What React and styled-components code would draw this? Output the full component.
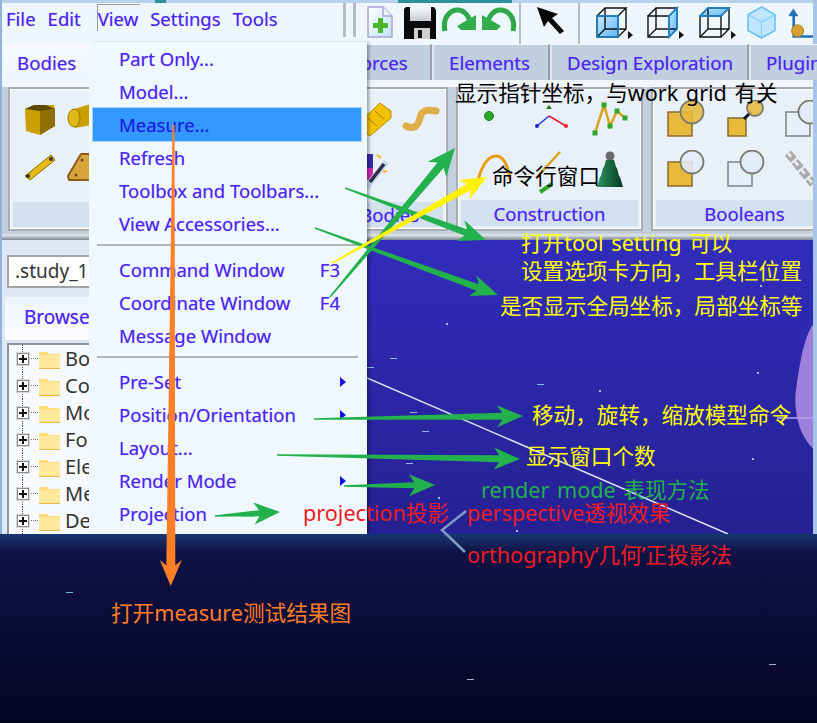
import React from "react";
import styled, { createGlobalStyle } from "styled-components";

const GlobalStyle = createGlobalStyle`
    html, body {
        margin: 0;
        padding: 0;
        background: #07072a;
    }
`;

const uiFont = `"Noto Sans", "Liberation Sans", sans-serif`;
const noteFont = `"Noto Sans", "Noto Sans CJK SC", sans-serif`;
const inkHalo = `0 0 1px rgba(74, 36, 245, 0.4)`;

const Stage = styled.div`
    position: relative;
    width: 817px;
    height: 723px;
    overflow: hidden;
    display: flex;
    flex-direction: column;
    font-family: ${uiFont};
`;

const Workspace = styled.div`
    position: relative;
    height: 534px;
    flex: none;
    display: flex;
    flex-direction: column;
    background: #eaf2fb;
    border-left: 2px solid #8fb3dc;
    border-right: 4px solid #a7c3e6;
    box-sizing: border-box;
`;

const TopStrip = styled.div`
    height: 3px;
    background: linear-gradient(90deg, #b9d2ec 0 153px, #2c8f9b 153px 164px, #b9d2ec 164px 396px, #2c8f9b 396px 510px, #b9d2ec 510px);
`;

const MenuBar = styled.div`
    height: 41px;
    display: flex;
    background: #eff7fe;
`;

const MenuList = styled.div`
    width: 341px;
    flex: none;
    display: flex;
    align-items: center;
    padding: 0 0 12px 3px;
    box-sizing: border-box;
    gap: 9px;
`;

const MenuLabel = styled.span`
    font-size: 18.5px;
    color: #4a24f5;
    text-shadow: ${inkHalo};
    padding: 1px 2px 0 0;
    margin-left: ${(p) => p.$shift || 0}px;
    border-top: ${(p) => (p.$open ? "1px solid #9a9a9a" : "1px solid transparent")};
    border-left: ${(p) => (p.$open ? "1px solid #9a9a9a" : "1px solid transparent")};
`;

const Grip = styled.div`
    width: 13px;
    height: 34px;
    flex: none;
    border-left: 3px solid #b5bcc4;
    border-right: 3px solid #b5bcc4;
    box-sizing: border-box;
    margin-right: 11px;
`;

const Toolbar = styled.div`
    display: flex;
    align-items: flex-start;
    padding-top: 3px;
`;

const ToolSlot = styled.div`
    width: ${(p) => p.$w}px;
    flex: none;
    display: flex;
`;

const ToolDivider = styled.div`
    width: 2px;
    height: 41px;
    margin-top: -3px;
    flex: none;
    background: #b4bcc4;
`;

const TabRow = styled.div`
    height: 36px;
    display: flex;
    background: #dfe9f5;
    gap: 2px;
`;

const Tab = styled.div`
    flex: none;
    box-sizing: border-box;
    width: ${(p) => (p.$w ? `${p.$w}px` : "auto")};
    padding: 0 0 0 15px;
    display: flex;
    align-items: center;
    white-space: nowrap;
    font-size: 18.7px;
    color: #4a24f5;
    text-shadow: ${inkHalo};
    background: ${(p) => (p.$active ? "linear-gradient(#f8fbff, #eef5fc)" : "#c1d0e0")};
    border-right: 2px solid #9aa0a8;
    border-top: 1px solid #f4f8fc;
`;

const Ribbon = styled.div`
    height: 152px;
    display: flex;
    gap: 8px;
    padding: 7px 0 1px 6px;
    box-sizing: border-box;
    overflow: hidden;
    background: linear-gradient(#f0f6fc 0 7px, #c2d0e0 7px);
`;

const RibbonGroup = styled.div`
    width: ${(p) => p.$w}px;
    flex: none;
    display: flex;
    flex-direction: column;
    box-sizing: border-box;
    border: 2px solid #a9adb2;
    box-shadow: inset 0 0 0 1px #fff;
    background: #e8f0f9;
    overflow: hidden;
`;

const IconGrid = styled.div`
    flex: 1;
    display: grid;
    grid-template-columns: ${(p) => p.$cols};
    grid-auto-rows: 50px;
    padding: ${(p) => p.$pad};
    align-items: start;
`;

const GroupLabel = styled.div`
    height: 31px;
    margin: 0 3px 3px;
    display: flex;
    align-items: center;
    justify-content: ${(p) => (p.$end ? "flex-end" : "center")};
    padding-right: ${(p) => (p.$end ? "24px" : "0")};
    font-size: 18.5px;
    color: #4a24f5;
    text-shadow: ${inkHalo};
    background: #d3e0ef;
`;

const Splitter = styled.div`
    height: 8px;
    flex: none;
    background: linear-gradient(#b6c4d4, #dfe5ec 40%, #a8b2be 70%, #80868e);
`;

const Lower = styled.div`
    flex: 1;
    min-height: 0;
    display: flex;
`;

const SidePanel = styled.div`
    width: 365px;
    flex: none;
    box-sizing: border-box;
    padding: 15px 0 0 5px;
    background: #dfe9f5;
    display: flex;
    flex-direction: column;
    overflow: hidden;
`;

const StudyField = styled.div`
    height: 33px;
    flex: none;
    box-sizing: border-box;
    border: 2px solid #a0a4a8;
    background: #fff;
    padding-left: 6px;
    font-size: 19px;
    line-height: 28px;
    color: #333;
`;

const BrowseTab = styled.div`
    height: 43px;
    flex: none;
    margin: 9px 0 3px -2px;
    padding-left: 19px;
    font-size: 19px;
    line-height: 41px;
    color: #4a24f5;
    text-shadow: ${inkHalo};
    background: linear-gradient(#eef5fc, #fafcff);
`;

const TreeBox = styled.div`
    flex: 1;
    border: 2px solid #8f9499;
    border-bottom: none;
    background: #f6fafe;
    padding: 0 0 0 8px;
    display: flex;
    flex-direction: column;
`;

const TreeRow = styled.div`
    height: 27px;
    flex: none;
    display: flex;
    align-items: center;
    gap: 5px;
    font-size: 20px;
    line-height: 24px;
    color: #333;
    background:
        repeating-linear-gradient(#555 0 1px, transparent 1px 2px) 5px 0 / 1px 100% no-repeat,
        repeating-linear-gradient(90deg, #777 0 1px, transparent 1px 2px) 12px 50% / 12px 1px no-repeat;
`;

const PlusBox = styled.span`
    width: 12px;
    height: 12px;
    flex: none;
    position: relative;
    box-sizing: border-box;
    border: 1px solid #8c8c8c;
    box-shadow: 0 0 0 1px #d8d8d8;
    background: #fff;
    margin-right: 5px;

    &::before {
        content: "";
        position: absolute;
        left: 1px;
        right: 1px;
        top: 4px;
        height: 2px;
        background: #111;
    }
    &::after {
        content: "";
        position: absolute;
        top: 1px;
        bottom: 1px;
        left: 4px;
        width: 2px;
        background: #111;
    }
`;

const Viewport = styled.div`
    flex: 1;
    position: relative;
    overflow: hidden;
    background: linear-gradient(#322cbc, #252192);
`;

const Scene = styled.svg`
    position: absolute;
    left: 0;
    top: 0;
`;

const DropMenu = styled.div`
    position: absolute;
    left: 87px;
    top: 42px;
    width: 278px;
    bottom: 0;
    background: #f0f8ff;
    box-shadow: 3px 0 3px -1px rgba(0, 0, 0, 0.35);
    display: flex;
    flex-direction: column;
`;

const DropRow = styled.div`
    height: 33px;
    flex: none;
    display: flex;
    align-items: center;
    justify-content: space-between;
    box-sizing: border-box;
    margin: 0 6px 0 4px;
    padding: 0 15px 0 26px;
    font-size: 18.5px;
    color: ${(p) => (p.$active ? "#1a1ae0" : "#4a24f5")};
    text-shadow: ${inkHalo};
    background: ${(p) => (p.$active ? "#3399ff" : "transparent")};
    outline: ${(p) => (p.$active ? "1px solid #a8d2ff" : "none")};
`;

const Key = styled.span`
    margin-right: 6px;
`;

const SubArrow = styled.span`
    width: 0;
    height: 0;
    border-left: 6px solid #1414e6;
    border-top: 5.5px solid transparent;
    border-bottom: 5.5px solid transparent;
`;

const Divider = styled.div`
    height: 2px;
    flex: none;
    margin: 4px 9px 7px 8px;
    background: #b3b3b3;
`;

const BottomPanel = styled.div`
    flex: 1;
    position: relative;
    background: linear-gradient(#173670, #0f1345 18px, #0c0d3a 70px, #050522);
`;

const Overlay = styled.svg`
    position: absolute;
    left: 0;
    top: 0;
    pointer-events: none;
`;

const Note = styled.div`
    position: absolute;
    left: ${(p) => p.$x}px;
    top: ${(p) => p.$y}px;
    white-space: nowrap;
    font-family: ${noteFont};
    font-size: 21.6px;
    line-height: 22px;
    word-spacing: 2px;
    color: ${(p) => p.$color};
`;

const NoteGroup = ({ items }) =>
    items.map((n) => (
        <Note key={n.text} $x={n.x} $y={n.y - 11} $color={n.color}>
            {n.text}
        </Note>
    ));

// tapered hand drawn arrow, thin at the tail and swept back at the head
const Arrow = ({ from, to, color, tail = 0.8, neck = 3, headLen = 26, headW = 11 }) => {
    const dx = to[0] - from[0];
    const dy = to[1] - from[1];
    const len = Math.hypot(dx, dy);
    const ux = dx / len;
    const uy = dy / len;
    const nx = -uy;
    const ny = ux;
    const at = (along, side) =>
        `${from[0] + ux * along + nx * side},${from[1] + uy * along + ny * side}`;
    const points = [
        at(0, -tail),
        at(len - headLen * 0.8, -neck),
        at(len - headLen, -headW),
        at(len, 0),
        at(len - headLen, headW),
        at(len - headLen * 0.8, neck),
        at(0, tail),
    ].join(" ");
    return <polygon points={points} fill={color} />;
};

const NewDocIcon = () => (
    <svg width="26" height="32" viewBox="0 0 26 32">
        <defs>
            <linearGradient id="docFill" x1="0" y1="0" x2="1" y2="1">
                <stop offset="0" stopColor="#ffffff" />
                <stop offset="1" stopColor="#bfe3fb" />
            </linearGradient>
        </defs>
        <path d="M1 1H16L25 10V31H1Z" fill="url(#docFill)" stroke="#a8a4d8" strokeWidth="1.5" />
        <path d="M16 1V10H25" fill="#eef4fb" stroke="#a8a4d8" strokeWidth="1.5" />
        <path d="M11 13H16V18H21V23H16V28H11V23H6V18H11Z" fill="#4cb52c" transform="translate(0 -1)" />
    </svg>
);

const SaveIcon = () => (
    <svg width="35" height="34" viewBox="0 0 35 34">
        <defs>
            <linearGradient id="saveLabel" x1="0" y1="0" x2="0" y2="1">
                <stop offset="0" stopColor="#f6f9fc" />
                <stop offset="1" stopColor="#c8ccd0" />
            </linearGradient>
        </defs>
        <path d="M3 1H31L33 4V33H1V3Z" fill="#0a0a0a" />
        <path d="M7 1H28V15H7Z" fill="url(#saveLabel)" />
        <path d="M11 22H27V33H11Z" fill="#cfcfcf" />
        <path d="M15 24H19V32H15Z" fill="#111" />
    </svg>
);

const TurnArrowIcon = ({ flip }) => (
    <svg width="36" height="28" viewBox="0 0 36 28">
        <g transform={flip ? "translate(36 0) scale(-1 1)" : undefined}>
            <path d="M4 25C1 11 10 3 18 4C24 5 27 9 29 15" fill="none" stroke="#2fa84a" strokeWidth="5" />
            <path d="M16 20L35 9V24H20Z" fill="#32ad4c" />
        </g>
    </svg>
);

const CursorIcon = () => (
    <svg width="30" height="30" viewBox="0 0 30 30">
        <path d="M1 1L22 8L16 12L28 25L24 28L12 15L8 21Z" fill="#060606" />
    </svg>
);

// wire cube, "face" picks which side is tinted blue
const faces = {
    front: "M1 10H22V31H1Z",
    side: "M22 10L30 2V23L22 31Z",
    top: "M1 10L9 2H30L22 10Z",
};

const ViewCubeIcon = ({ face }) => (
    <svg width="37" height="34" viewBox="0 0 37 34">
        <defs>
            <linearGradient id="cubeFill" x1="0" y1="0" x2="1" y2="1">
                <stop offset="0" stopColor="#c9e9ff" />
                <stop offset="1" stopColor="#5ab7f2" />
            </linearGradient>
        </defs>
        <path d={faces[face]} fill="url(#cubeFill)" />
        <g fill="none" stroke="#111" strokeWidth="1.4">
            <path d="M1 10H22V31H1Z" />
            <path d="M1 10L9 2H30L22 10M30 2V23L22 31M9 2V23H30M9 23L1 31" />
        </g>
        <path d={faces[face]} fill="none" stroke="#1c8ddc" strokeWidth="1.6" />
        <path d="M32 25L37 29L32 33Z" fill="#111" />
    </svg>
);

const SolidCubeIcon = () => (
    <svg width="29" height="33" viewBox="0 0 29 33">
        <path d="M14.5 1L28 8.5V24.5L14.5 32L1 24.5V8.5Z" fill="#bfe6fe" stroke="#6cc2f8" strokeWidth="1.6" />
        <path d="M1 8.5L14.5 16L28 8.5M14.5 16V32" fill="none" stroke="#84cefa" strokeWidth="1.2" />
    </svg>
);

const AxisIcon = () => (
    <svg width="28" height="36" viewBox="0 0 28 36">
        <path d="M5 0L11 9H7V31H28V34H4V9H-1Z" fill="#1f6fb8" />
        <circle cx="10" cy="26" r="7" fill="#d8a030" stroke="#a07820" />
    </svg>
);

const BoxSolidIcon = () => (
    <svg width="36" height="34" viewBox="0 0 36 34">
        <path d="M3 7L12 3H32L33 7V24L18 33L4 29Z" fill="#c9a000" />
        <path d="M18 9L33 7V24L18 33Z" fill="#8f6f00" />
        <path d="M3 7L18 9L33 7L24 3H12Z" fill="#5c4a00" />
    </svg>
);

const RollerIcon = () => (
    <svg width="30" height="28" viewBox="0 0 30 28">
        <path d="M7 7L30 0V22L8 26Z" fill="#c9a000" />
        <ellipse cx="7" cy="16" rx="6" ry="9" fill="#e0b818" stroke="#96780a" />
    </svg>
);

const LinkBarIcon = () => (
    <svg width="34" height="30" viewBox="0 0 34 30">
        <path d="M3 24L29 3L33 8L8 28Z" fill="#e6b814" stroke="#8a6c00" />
        <circle cx="6" cy="24" r="2" fill="#333" />
        <circle cx="29" cy="7" r="2" fill="#333" />
    </svg>
);

const PlateIcon = () => (
    <svg width="34" height="30" viewBox="0 0 34 30">
        <path d="M14 2H22L33 28L2 28L1 24Z" fill="#d6a63a" stroke="#8a5e14" strokeWidth="2" strokeLinejoin="round" />
        <circle cx="15" cy="8" r="1.5" fill="#6a4a10" />
        <circle cx="9" cy="23" r="1.5" fill="#6a4a10" />
        <circle cx="24" cy="21" r="1.5" fill="#6a4a10" />
    </svg>
);

const TapeIcon = () => (
    <svg width="32" height="34" viewBox="0 0 32 34">
        <path d="M20 1L31 9V16L10 34L0 26V20Z" fill="#f2c200" stroke="#b58c00" />
        <path d="M8 16L17 24M15 9L24 17" stroke="#a67f00" fill="none" />
    </svg>
);

const SweepIcon = () => (
    <svg width="38" height="30" viewBox="0 0 38 30">
        <path d="M4 24C12 28 16 24 18 16C19 9 24 7 34 9" fill="none" stroke="#dfae48" strokeWidth="7" strokeLinecap="round" />
    </svg>
);

const PaletteWandIcon = () => (
    <svg width="30" height="38" viewBox="0 0 30 38">
        <path d="M0 2H13V28H0Z" fill="#3a2aa8" />
        <path d="M0 16H13V28H0Z" fill="#d428b8" />
        <path d="M6 36L26 10" stroke="#c5d6f0" strokeWidth="6" />
        <path d="M10 30L24 12" stroke="#2d2d4a" strokeWidth="3.5" />
        <path d="M17 3L21 6M27 19L23 20" stroke="#f0b030" strokeWidth="2" />
    </svg>
);

const PointIcon = () => (
    <svg width="40" height="30" viewBox="0 0 40 30">
        <circle cx="15" cy="16" r="4.5" fill="#2da82a" stroke="#1d7a1a" />
    </svg>
);

const BentLineIcon = () => (
    <svg width="36" height="34" viewBox="0 0 36 34">
        <path d="M3 26L15 16" stroke="#2040e0" strokeWidth="1.6" />
        <path d="M15 16L32 26" stroke="#e02030" strokeWidth="1.6" />
        <circle cx="3" cy="26" r="2" fill="#2020e0" />
        <circle cx="32" cy="26" r="2" fill="#e02030" />
        <path d="M15 5L18 9H12Z" fill="#1d7a1a" />
    </svg>
);

const PolylineIcon = () => (
    <svg width="36" height="36" viewBox="0 0 36 36">
        <path d="M3 33L12 5L18 26L25 11L33 18" fill="none" stroke="#dca21e" strokeWidth="2.5" />
        {[[3, 33], [12, 5], [18, 26], [25, 11], [33, 18]].map(([x, y]) => (
            <rect key={x} x={x - 2.5} y={y - 2.5} width="5" height="5" fill="#2da82a" />
        ))}
    </svg>
);

const CurveIcon = () => (
    <svg width="44" height="44" viewBox="0 0 44 44">
        <path d="M2 40C6 16 14 6 22 6C30 6 34 16 36 30" fill="none" stroke="#ea9c0e" strokeWidth="3" />
    </svg>
);

const SlashIcon = () => (
    <svg width="34" height="44" viewBox="0 0 34 44">
        <path d="M2 28L26 2" stroke="#dca21e" strokeWidth="2.5" />
        <path d="M6 42L18 34" stroke="#2da82a" strokeWidth="4" />
    </svg>
);

const ConeIcon = () => (
    <svg width="32" height="38" viewBox="-6 0 32 38">
        <defs>
            <linearGradient id="coneFill" x1="0" y1="0" x2="1" y2="0">
                <stop offset="0" stopColor="#2c9460" />
                <stop offset="1" stopColor="#083a20" />
            </linearGradient>
        </defs>
        <circle cx="12" cy="6" r="4.5" fill="#6a6a6a" />
        <path d="M8 10H16L18 17L19 18L21 26L22 27L25 37H-1L2 27L3 26L5 18L6 17Z" fill="url(#coneFill)" />
    </svg>
);

const Shapes = ({ square, circle, small, link, solid }) => (
    <svg width="40" height="38" viewBox="0 0 40 38">
        <rect
            x="1"
            y={small ? 18 : 12}
            width={small ? 18 : 24}
            height={small ? 18 : 24}
            fill={square}
            stroke={solid ? "#8a6c28" : "#7c8288"}
            strokeWidth="1.5"
        />
        {link && <path d="M17 19L24 12" stroke="#111" strokeWidth="3" />}
        <circle
            cx={small ? 28 : 25}
            cy={small ? 8 : 12}
            r={small ? 8 : 11.5}
            fill={circle}
            fillOpacity={solid ? 0.88 : 1}
            stroke="#7c7a70"
            strokeWidth="1.8"
        />
    </svg>
);

const ChainIcon = () => (
    <svg width="31" height="38" viewBox="0 0 31 38">
        <path d="M3 3L28 34" stroke="#aaa" strokeWidth="8" strokeDasharray="9 2" fill="none" />
        <path d="M3 3L28 34" stroke="#eee" strokeWidth="2.5" strokeDasharray="5 6" fill="none" />
    </svg>
);

const FolderIcon = () => (
    <svg width="21" height="20" viewBox="0 0 21 20">
        <path d="M0 3H8L10 5H21V20H0Z" fill="#ffdc78" />
        <path d="M0 6H21V20H0Z" fill="#ffe79c" />
        <path d="M0 19H21V20H0Z" fill="#e8b850" />
    </svg>
);

const gold = "#e6b83c";
const paleBox = "#e6f0fb";
const paleBall = "#e2edfb";

const menuTop = ["Part Only...", "Model...", "Measure...", "Refresh", "Toolbox and Toolbars...", "View Accessories..."];
const menuMid = [
    { label: "Command Window", key: "F3" },
    { label: "Coordinate Window", key: "F4" },
    { label: "Message Window" },
];
const menuEnd = [
    { label: "Pre-Set", sub: true },
    { label: "Position/Orientation", sub: true },
    { label: "Layout..." },
    { label: "Render Mode", sub: true },
    { label: "Projection" },
];

const treeItems = ["Bo", "Co", "Mo", "For", "Ele", "Me", "De"];

const notes = [
    { text: "显示指针坐标，与work grid 有关", x: 455, y: 93, color: "#000" },
    { text: "命令行窗口", x: 492, y: 176, color: "#000" },
    { text: "打开tool setting 可以", x: 521, y: 243, color: "#ffff00" },
    { text: "设置选项卡方向，工具栏位置", x: 521, y: 271, color: "#ffff00" },
    { text: "是否显示全局坐标，局部坐标等", x: 500, y: 306, color: "#ffff00" },
    { text: "移动，旋转，缩放模型命令", x: 532, y: 415, color: "#ffff00" },
    { text: "显示窗口个数", x: 526, y: 456, color: "#ffff00" },
    { text: "render mode 表现方法", x: 481, y: 490, color: "#22b14c" },
    { text: "projection投影", x: 303, y: 513, color: "#ed1c24" },
    { text: "perspective透视效果", x: 467, y: 513, color: "#ed1c24" },
    { text: "orthography‘几何’正投影法", x: 467, y: 555, color: "#ed1c24" },
    { text: "打开measure测试结果图", x: 111, y: 613, color: "#ff7f27" },
];

const viewDots = [[232, 150], [385, 218], [71, 257], [149, 290], [393, 45], [390, 132], [79, 83]];
const viewDashes = [[170, 144], [43, 172], [55, 191], [39, 223], [23, 118], [0, 127]];

const App = () => {
    return (
        <Stage>
            <GlobalStyle />
            <Workspace>
                <TopStrip />
                <MenuBar>
                    <MenuList>
                        <MenuLabel>File</MenuLabel>
                        <MenuLabel>Edit</MenuLabel>
                        <MenuLabel $open $shift={5}>View</MenuLabel>
                        <MenuLabel>Settings</MenuLabel>
                        <MenuLabel>Tools</MenuLabel>
                    </MenuList>
                    <Grip />
                    <Toolbar>
                        <ToolSlot $w={36}><NewDocIcon /></ToolSlot>
                        <ToolSlot $w={38}><SaveIcon /></ToolSlot>
                        <ToolSlot $w={40}><TurnArrowIcon /></ToolSlot>
                        <ToolSlot $w={38}><TurnArrowIcon flip /></ToolSlot>
                        <ToolDivider />
                        <ToolSlot $w={15} />
                        <ToolSlot $w={42}><CursorIcon /></ToolSlot>
                        <ToolDivider />
                        <ToolSlot $w={16} />
                        <ToolSlot $w={51}><ViewCubeIcon face="front" /></ToolSlot>
                        <ToolSlot $w={52}><ViewCubeIcon face="side" /></ToolSlot>
                        <ToolSlot $w={48}><ViewCubeIcon face="top" /></ToolSlot>
                        <ToolSlot $w={42}><SolidCubeIcon /></ToolSlot>
                        <ToolSlot $w={24}><AxisIcon /></ToolSlot>
                    </Toolbar>
                </MenuBar>
                <TabRow>
                    <Tab $active $w={332}>Bodies</Tab>
                    <Tab $w={96}>Forces</Tab>
                    <Tab $w={116}>Elements</Tab>
                    <Tab $w={197}>Design Exploration</Tab>
                    <Tab>Plugins</Tab>
                </TabRow>
                <Ribbon>
                    <RibbonGroup $w={440}>
                        <IconGrid $cols="45px 45px 248px 42px 1fr" $pad="13px 0 0 12px">
                            <BoxSolidIcon />
                            <RollerIcon />
                            <span />
                            <TapeIcon />
                            <SweepIcon />
                            <LinkBarIcon />
                            <PlateIcon />
                            <span />
                            <PaletteWandIcon />
                        </IconGrid>
                        <GroupLabel $end>Bodies</GroupLabel>
                    </RibbonGroup>
                    <RibbonGroup $w={187}>
                        <IconGrid $cols="60px 58px 1fr" $pad="11px 0 0 16px">
                            <PointIcon />
                            <BentLineIcon />
                            <PolylineIcon />
                            <CurveIcon />
                            <SlashIcon />
                            <ConeIcon />
                        </IconGrid>
                        <GroupLabel>Construction</GroupLabel>
                    </RibbonGroup>
                    <RibbonGroup $w={187}>
                        <IconGrid $cols="60px 58px 1fr" $pad="11px 0 0 14px">
                            <Shapes square={gold} circle={gold} solid />
                            <Shapes square={gold} circle={gold} small link solid />
                            <Shapes square={paleBox} circle={paleBall} />
                            <Shapes square={gold} circle={paleBall} solid />
                            <Shapes square={paleBox} circle={paleBall} />
                            <ChainIcon />
                        </IconGrid>
                        <GroupLabel>Booleans</GroupLabel>
                    </RibbonGroup>
                </Ribbon>
                <Splitter />
                <Lower>
                    <SidePanel>
                        <StudyField>.study_1</StudyField>
                        <BrowseTab>Browse</BrowseTab>
                        <TreeBox>
                            {treeItems.map((name) => (
                                <TreeRow key={name}>
                                    <PlusBox />
                                    <FolderIcon />
                                    <span>{name}</span>
                                </TreeRow>
                            ))}
                        </TreeBox>
                    </SidePanel>
                    <Viewport>
                        <Scene width="450" height="294" viewBox="0 0 450 294">
                            <path d="M0 138L361 294" stroke="#dfe3f4" strokeWidth="1.5" />
                            <path d="M450 80C438 90 433 120 429 150C426 175 434 200 450 212Z" fill="#9d7fdc" />
                            <path d="M410 178H446" stroke="#b9a4ec" strokeWidth="1.5" />
                            {viewDots.map(([x, y]) => (
                                <rect key={`${x}-${y}`} x={x} y={y} width="2" height="2" fill="#aeb4ea" />
                            ))}
                            {viewDashes.map(([x, y]) => (
                                <rect key={`${x}:${y}`} x={x} y={y} width="7" height="1" fill="#8fb8e4" />
                            ))}
                        </Scene>
                    </Viewport>
                </Lower>
                <DropMenu>
                    {menuTop.map((label) => (
                        <DropRow key={label} $active={label === "Measure..."}>{label}</DropRow>
                    ))}
                    <Divider />
                    {menuMid.map((item) => (
                        <DropRow key={item.label}>
                            {item.label}
                            {item.key && <Key>{item.key}</Key>}
                        </DropRow>
                    ))}
                    <Divider />
                    {menuEnd.map((item) => (
                        <DropRow key={item.label}>
                            {item.label}
                            {item.sub && <SubArrow />}
                        </DropRow>
                    ))}
                </DropMenu>
            </Workspace>
            <BottomPanel>
                <Scene width="817" height="189" viewBox="0 0 817 189">
                    <rect x="66" y="58" width="7" height="1" fill="#6fb8c8" />
                    <rect x="769" y="130" width="7" height="1" fill="#9fb0d0" />
                    <rect x="467" y="145" width="7" height="1" fill="#9fb0d0" />
                </Scene>
            </BottomPanel>
            <Overlay width="817" height="723" viewBox="0 0 817 723">
                <Arrow from={[345, 188]} to={[486, 240]} color="#22b14c" neck={3.5} headLen={27} headW={11} />
                <Arrow from={[315, 228]} to={[498, 295]} color="#22b14c" neck={3.5} headLen={27} headW={11} />
                <Arrow from={[330, 297]} to={[455, 148]} color="#22b14c" neck={4} headLen={28} headW={12} />
                <Arrow from={[332, 263]} to={[487, 177]} color="#fff200" neck={3.5} headLen={26} headW={11} />
                <Arrow from={[314, 419]} to={[523, 416]} color="#22b14c" neck={3.5} headLen={26} headW={11} />
                <Arrow from={[277, 455]} to={[520, 459]} color="#22b14c" neck={3.5} headLen={26} headW={11} />
                <Arrow from={[344, 486]} to={[435, 485]} color="#22b14c" neck={3} headLen={26} headW={11} />
                <Arrow from={[215, 516]} to={[280, 512]} color="#22b14c" neck={3} headLen={26} headW={11} />
                <Arrow from={[173.5, 125]} to={[170.7, 586]} color="#ff7f27" tail={1} neck={4.5} headLen={26} headW={11} />
                <path d="M466 511L442 530L465 552" fill="none" stroke="#7f9cc2" strokeWidth="2.5" />
            </Overlay>
            <NoteGroup items={notes} />
        </Stage>
    );
};

export default App;
